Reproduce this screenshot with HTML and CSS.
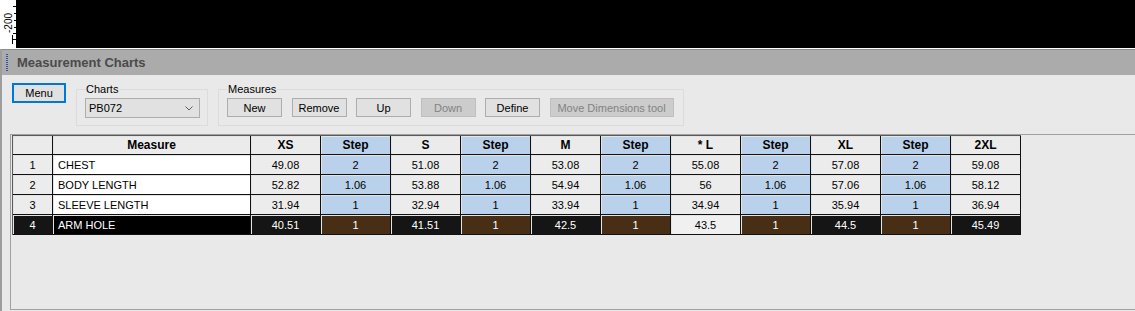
FILE: index.html
```html
<!DOCTYPE html>
<html>
<head lang="en">
    <meta charset="UTF-8">
    <title>Measurement Charts</title>
    <link rel="stylesheet" href="styles.css">
</head>
<body>
<div class="topArea">
    <div class="ruler">
        <svg width="16" height="48" viewBox="0 0 16 48">
            <g stroke="#000" stroke-width="1">
                <line x1="13" y1="6.5" x2="16" y2="6.5"/>
                <line x1="14" y1="13.5" x2="16" y2="13.5"/>
                <line x1="14" y1="20.5" x2="16" y2="20.5"/>
                <line x1="14" y1="27.5" x2="16" y2="27.5"/>
                <line x1="13" y1="33.5" x2="16" y2="33.5"/>
                <line x1="12.5" y1="35" x2="12.5" y2="44"/>
                <line x1="12" y1="39.5" x2="16" y2="39.5"/>
            </g>
            <text class="rulerText" transform="translate(12,33) rotate(-90)">-200</text>
        </svg>
    </div>
    <div class="canvas"></div>
</div>
<div class="panel">
    <div class="titleBar">
        <span class="grip"></span>
        <span class="title">Measurement Charts</span>
    </div>
    <div class="toolBar">
        <button class="btn menuBtn">Menu</button>
        <fieldset class="group chartsGroup">
            <legend>Charts</legend>
            <div class="combo">
                <span>PB072</span>
                <svg width="8" height="5" viewBox="0 0 8 5"><polyline points="0.5,0.5 4,4 7.5,0.5" fill="none" stroke="#606060" stroke-width="1"/></svg>
            </div>
        </fieldset>
        <fieldset class="group measuresGroup">
            <legend>Measures</legend>
            <div class="btnRow">
                <button class="btn">New</button>
                <button class="btn">Remove</button>
                <button class="btn">Up</button>
                <button class="btn" disabled>Down</button>
                <button class="btn">Define</button>
                <button class="btn wideBtn" disabled>Move Dimensions tool</button>
            </div>
        </fieldset>
    </div>
    <div class="gridBox">
        <table class="grid">
            <colgroup>
                <col class="cNum"><col class="cName">
                <col class="cVal"><col class="cVal"><col class="cVal"><col class="cVal">
                <col class="cVal"><col class="cVal"><col class="cVal"><col class="cVal">
                <col class="cVal"><col class="cVal"><col class="cVal">
            </colgroup>
            <tr>
                <th></th><th>Measure</th>
                <th>XS</th><th class="step">Step</th>
                <th>S</th><th class="step">Step</th>
                <th>M</th><th class="step">Step</th>
                <th>* L</th><th class="step">Step</th>
                <th>XL</th><th class="step">Step</th>
                <th>2XL</th>
            </tr>
            <tr>
                <td class="num">1</td><td class="name">CHEST</td>
                <td>49.08</td><td class="step">2</td>
                <td>51.08</td><td class="step">2</td>
                <td>53.08</td><td class="step">2</td>
                <td>55.08</td><td class="step">2</td>
                <td>57.08</td><td class="step">2</td>
                <td>59.08</td>
            </tr>
            <tr>
                <td class="num">2</td><td class="name">BODY LENGTH</td>
                <td>52.82</td><td class="step">1.06</td>
                <td>53.88</td><td class="step">1.06</td>
                <td>54.94</td><td class="step">1.06</td>
                <td>56</td><td class="step">1.06</td>
                <td>57.06</td><td class="step">1.06</td>
                <td>58.12</td>
            </tr>
            <tr>
                <td class="num">3</td><td class="name">SLEEVE LENGTH</td>
                <td>31.94</td><td class="step">1</td>
                <td>32.94</td><td class="step">1</td>
                <td>33.94</td><td class="step">1</td>
                <td>34.94</td><td class="step">1</td>
                <td>35.94</td><td class="step">1</td>
                <td>36.94</td>
            </tr>
            <tr class="sel">
                <td class="num">4</td><td class="name">ARM HOLE</td>
                <td>40.51</td><td class="step">1</td>
                <td>41.51</td><td class="step">1</td>
                <td>42.5</td><td class="step">1</td>
                <td class="cur">43.5</td><td class="step">1</td>
                <td>44.5</td><td class="step">1</td>
                <td>45.49</td>
            </tr>
        </table>
    </div>
</div>
</body>
</html>
```

FILE: styles.css
```css
*{padding: 0;margin: 0;box-sizing: border-box;}
body{
    width: 1135px;
    height: 311px;
    overflow: hidden;
    background: #e9e9e9;
    font-family: "Liberation Sans", Arial, sans-serif;
    font-size: 11px;
    color: #000;
}

/* drawing area on top */
.topArea{
    display: flex;
    height: 49px;
    border-bottom: 1px solid #fff;
    background: #000;
}
.ruler{
    width: 16px;
    background: #fff;
}
.ruler svg{display: block;}
.rulerText{
    font-family: "Liberation Sans", Arial, sans-serif;
    font-size: 10px;
    fill: #000;
}
.canvas{
    flex: 1;
    background: #000;
}

/* docked panel */
.panel{
    height: 262px;
    border-left: 2px solid #9d9d9d;
}
.titleBar{
    display: flex;
    align-items: center;
    height: 26px;
    border-top: 1px solid #8c8c8c;
    background: #ababab;
}
.grip{
    width: 2px;
    height: 18px;
    margin-left: 4px;
    background: repeating-linear-gradient(#2c5aa0 0 1px, transparent 1px 2px);
}
.title{
    margin-left: 9px;
    font-size: 13px;
    font-weight: bold;
    color: #4a4a4a;
}

.toolBar{
    display: flex;
    align-items: flex-start;
    height: 59px;
    padding: 8px 0 0 10px;
}
.btn{
    height: 19px;
    border: 1px solid #adadad;
    background: #e1e1e1;
    font-family: "Liberation Sans", Arial, sans-serif;
    font-size: 11px;
    color: #000;
}
.btn:disabled{
    border-color: #bfbfbf;
    background: #cccccc;
    color: #838383;
}
.menuBtn{
    width: 54px;
    height: 20px;
    border: 2px solid #0078d7;
}
.group{
    margin: -1px 0 0 10px;
    border: 1px solid #dcdcdc;
}
.group legend{
    padding: 0 1px;
    line-height: 14px;
}
.chartsGroup{
    width: 132px;
    padding: 2px 7px 7px 8px;
}
.measuresGroup{
    width: 466px;
    padding: 2px 8px 8px 8px;
}
.combo{
    display: flex;
    align-items: center;
    justify-content: space-between;
    width: 115px;
    height: 20px;
    padding: 0 6px 0 3px;
    border: 1px solid #adadad;
    background: #e1e1e1;
}
.btnRow{
    display: flex;
    gap: 9.5px;
}
.btnRow .btn{width: 55px;}
.btnRow .wideBtn{width: 124px;}

/* measurement grid */
.gridBox{
    height: 176px;
    margin-left: 8px;
    padding-left: 1px;
    border: 1px solid #a0a0a0;
    border-right: none;
}
.grid{
    table-layout: fixed;
    width: 1009px;
    border-collapse: separate;
    border-spacing: 0;
    border-left: 1px solid #5a5a5a;
    border-top: 1px solid #5a5a5a;
}
.cNum{width: 40px;}
.cName{width: 198px;}
.cVal{width: 70px;}
.grid th,
.grid td{
    border-right: 1px solid #111;
    border-bottom: 1px solid #111;
    box-shadow: inset 1px 1px 0 #e4e4e4;
    text-align: center;
    white-space: nowrap;
    overflow: hidden;
}
.grid th{
    height: 19px;
    font-size: 12px;
    font-weight: bold;
    background: #ebebeb;
}
.grid td{
    height: 20px;
    padding: 0 3px;
    background: #ececec;
}
.grid .step{background: #b9d1ea;}
.grid td.name{
    padding-left: 5px;
    text-align: left;
    background: #fff;
}
.grid .sel td{
    background: #151515;
    color: #fff;
}
.grid .sel td.name{background: #000;}
.grid .sel td.step{background: #472e15;}
.grid .sel td.cur{
    background: #f0f0f0;
    color: #000;
}
```
